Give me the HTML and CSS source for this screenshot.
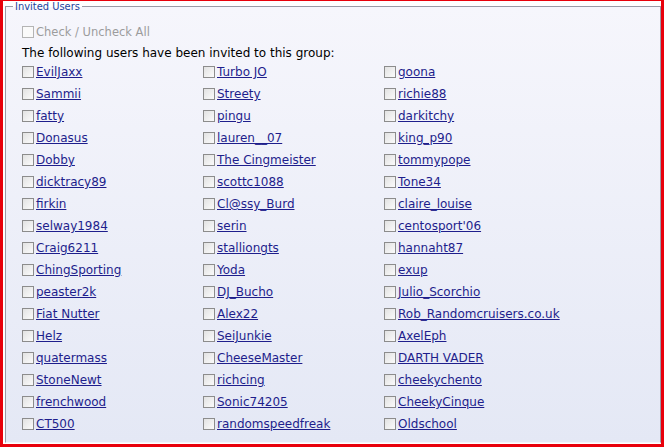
FILE: index.html
```html
<!DOCTYPE html>
<html lang="en">
<head>
    <meta charset="UTF-8">
    <title>Invited Users</title>
    <link rel="stylesheet" href="styles.css">
</head>
<body>
    <div class="frame">
        <fieldset class="invited">
            <legend class="invited-title">Invited Users</legend>
            <label class="check-all">
                <input type="checkbox" class="box" disabled>
                <span>Check / Uncheck All</span>
            </label>
            <p class="intro">The following users have been invited to this group:</p>
            <div class="user-list">
                <label class="user"><input type="checkbox" class="box"><a href="#">EvilJaxx</a></label>
                <label class="user"><input type="checkbox" class="box"><a href="#">Turbo JO</a></label>
                <label class="user"><input type="checkbox" class="box"><a href="#">goona</a></label>
                <label class="user"><input type="checkbox" class="box"><a href="#">Sammii</a></label>
                <label class="user"><input type="checkbox" class="box"><a href="#">Streety</a></label>
                <label class="user"><input type="checkbox" class="box"><a href="#">richie88</a></label>
                <label class="user"><input type="checkbox" class="box"><a href="#">fatty</a></label>
                <label class="user"><input type="checkbox" class="box"><a href="#">pingu</a></label>
                <label class="user"><input type="checkbox" class="box"><a href="#">darkitchy</a></label>
                <label class="user"><input type="checkbox" class="box"><a href="#">Donasus</a></label>
                <label class="user"><input type="checkbox" class="box"><a href="#">lauren__07</a></label>
                <label class="user"><input type="checkbox" class="box"><a href="#">king_p90</a></label>
                <label class="user"><input type="checkbox" class="box"><a href="#">Dobby</a></label>
                <label class="user"><input type="checkbox" class="box"><a href="#">The Cingmeister</a></label>
                <label class="user"><input type="checkbox" class="box"><a href="#">tommypope</a></label>
                <label class="user"><input type="checkbox" class="box"><a href="#">dicktracy89</a></label>
                <label class="user"><input type="checkbox" class="box"><a href="#">scottc1088</a></label>
                <label class="user"><input type="checkbox" class="box"><a href="#">Tone34</a></label>
                <label class="user"><input type="checkbox" class="box"><a href="#">firkin</a></label>
                <label class="user"><input type="checkbox" class="box"><a href="#">Cl@ssy_Burd</a></label>
                <label class="user"><input type="checkbox" class="box"><a href="#">claire_louise</a></label>
                <label class="user"><input type="checkbox" class="box"><a href="#">selway1984</a></label>
                <label class="user"><input type="checkbox" class="box"><a href="#">serin</a></label>
                <label class="user"><input type="checkbox" class="box"><a href="#">centosport'06</a></label>
                <label class="user"><input type="checkbox" class="box"><a href="#">Craig6211</a></label>
                <label class="user"><input type="checkbox" class="box"><a href="#">stalliongts</a></label>
                <label class="user"><input type="checkbox" class="box"><a href="#">hannaht87</a></label>
                <label class="user"><input type="checkbox" class="box"><a href="#">ChingSporting</a></label>
                <label class="user"><input type="checkbox" class="box"><a href="#">Yoda</a></label>
                <label class="user"><input type="checkbox" class="box"><a href="#">exup</a></label>
                <label class="user"><input type="checkbox" class="box"><a href="#">peaster2k</a></label>
                <label class="user"><input type="checkbox" class="box"><a href="#">DJ_Bucho</a></label>
                <label class="user"><input type="checkbox" class="box"><a href="#">Julio_Scorchio</a></label>
                <label class="user"><input type="checkbox" class="box"><a href="#">Fiat Nutter</a></label>
                <label class="user"><input type="checkbox" class="box"><a href="#">Alex22</a></label>
                <label class="user"><input type="checkbox" class="box"><a href="#">Rob_Randomcruisers.co.uk</a></label>
                <label class="user"><input type="checkbox" class="box"><a href="#">Helz</a></label>
                <label class="user"><input type="checkbox" class="box"><a href="#">SeiJunkie</a></label>
                <label class="user"><input type="checkbox" class="box"><a href="#">AxelEph</a></label>
                <label class="user"><input type="checkbox" class="box"><a href="#">quatermass</a></label>
                <label class="user"><input type="checkbox" class="box"><a href="#">CheeseMaster</a></label>
                <label class="user"><input type="checkbox" class="box"><a href="#">DARTH VADER</a></label>
                <label class="user"><input type="checkbox" class="box"><a href="#">StoneNewt</a></label>
                <label class="user"><input type="checkbox" class="box"><a href="#">richcing</a></label>
                <label class="user"><input type="checkbox" class="box"><a href="#">cheekychento</a></label>
                <label class="user"><input type="checkbox" class="box"><a href="#">frenchwood</a></label>
                <label class="user"><input type="checkbox" class="box"><a href="#">Sonic74205</a></label>
                <label class="user"><input type="checkbox" class="box"><a href="#">CheekyCinque</a></label>
                <label class="user"><input type="checkbox" class="box"><a href="#">CT500</a></label>
                <label class="user"><input type="checkbox" class="box"><a href="#">randomspeedfreak</a></label>
                <label class="user"><input type="checkbox" class="box"><a href="#">Oldschool</a></label>
            </div>
        </fieldset>
    </div>
</body>
</html>
```

FILE: styles.css
```css
* {
    margin: 0;
    padding: 0;
    box-sizing: border-box;
}

body {
    font-family: "DejaVu Sans", Verdana, sans-serif;
    font-size: 12px;
    color: #000;
    background: #fff;
    width: 664px;
    height: 447px;
    overflow: hidden;
}

.frame {
    height: 447px;
    border-style: solid;
    border-color: #e8000b;
    border-width: 1px 3px 3px 3px;
    padding: 0 0 1px 2px;
    background: #fff;
    display: flex;
}

.invited {
    flex: 1;
    border: 1px solid #9a9aa6;
    border-bottom-color: #f4f4fa;
    padding: 0 0 0 16px;
    background: linear-gradient(#f6f6fc, #e4e8f5);
}

.invited-title {
    margin-left: -9px;
    padding: 0 2px;
    font-family: "DejaVu Sans Condensed", Tahoma, sans-serif;
    font-size: 11px;
    line-height: 11px;
    color: #23439c;
}

.check-all {
    display: flex;
    align-items: center;
    height: 14px;
    margin-top: 13px;
    color: #9c9c9c;
    font-size: 11.5px;
}

.intro {
    margin-top: 7px;
    height: 14px;
    line-height: 14px;
}

.user-list {
    display: grid;
    grid-template-columns: repeat(3, 181px);
    grid-auto-rows: 22px;
    margin-top: 1px;
}

.user {
    display: flex;
    align-items: center;
}

.user a {
    color: #1e1e8c;
    text-decoration: underline;
}

.box {
    appearance: none;
    -webkit-appearance: none;
    width: 12px;
    height: 12px;
    margin-right: 2px;
    border: 1px solid #8c8c8c;
    background: linear-gradient(135deg, #e2e2e2, #fbfbfb);
    flex: none;
}

.box:disabled {
    border-color: #b4b4b4;
    background: #fafafa;
}
```
